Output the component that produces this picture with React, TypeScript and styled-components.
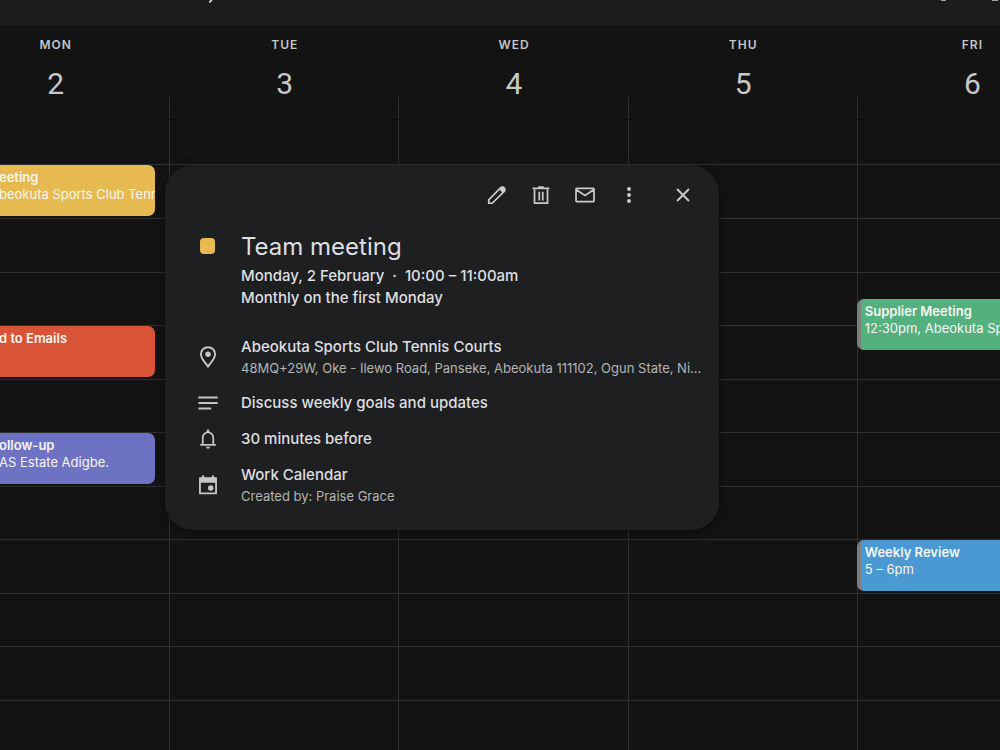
import React from 'react';
import styled, { createGlobalStyle } from 'styled-components';

const GlobalStyle = createGlobalStyle`
  * { box-sizing: border-box; }
  html, body, #root { height: 100%; }
  body {
    margin: 0;
    background: #131313;
    color: #dedfe0;
    font-family: Inter, "Liberation Sans", sans-serif;
    overflow: hidden;
  }
  h1, h2, p { margin: 0; padding: 0; }
`;

const Page = styled.div`
  display: flex;
  flex-direction: column;
  min-height: 100%;
  position: relative;
  overflow: hidden;
`;

const TopBar = styled.header`
  flex: none;
  height: 25px;
  background: #1c1c1c;
  display: flex;
  justify-content: space-between;
`;

const Sliver = styled.svg`
  display: block;
  height: 4px;
`;

const Week = styled.main`
  flex: 1;
  display: grid;
  grid-template-columns: repeat(5, 1fr);
  width: 114.6%;
  margin-left: -5.9%;
`;

const Day = styled.section`
  display: flex;
  flex-direction: column;
  min-width: 0;
`;

const DayHead = styled.header`
  height: 72px;
  padding-top: 11px;
  text-align: center;
`;

const DayName = styled.h2`
  font-size: 12px;
  line-height: 17px;
  font-weight: 600;
  letter-spacing: 1px;
  color: #c4c5c5;
`;

const DayNumber = styled.p`
  margin-top: 11px;
  font-family: Roboto, Inter, sans-serif;
  font-size: 30px;
  line-height: 40px;
  font-weight: 400;
  color: #c6c7c7;
`;

const Slots = styled.div`
  flex: 1;
  display: flex;
  flex-direction: column;
  border-right: 1px solid #303030;
`;

const AllDay = styled.div`
  height: 23px;
  border-bottom: 1px solid #0d0d0d;
  margin-right: -1px;
`;

const Lead = styled.div`
  height: 45px;
  border-bottom: 1px solid #303030;
`;

const Hours = styled.div`
  display: grid;
  grid-template-rows: 54px repeat(5, 54px 53px);
`;

const Slot = styled.div`
  border-bottom: 1px solid #303030;
  min-width: 0;
`;

const Event = styled.article<{ $color: string; $cut?: boolean; $bar?: boolean }>`
  height: 51px;
  margin-right: 14px;
  margin-left: ${p => (p.$bar ? -1 : 0)}px;
  padding: 4px 0 0 ${p => (p.$cut ? 58 : p.$bar ? 4 : 8)}px;
  border-left: ${p => (p.$bar ? '4px solid #7d7d7d' : '0')};
  border-radius: 7px;
  background: ${p => p.$color};
  color: #f7f7f2;
  font-size: 13px;
  line-height: 17px;
  white-space: nowrap;
  overflow: hidden;
`;

const EventTitle = styled.h2`
  font-size: 13px;
  line-height: 17px;
  font-weight: 600;
`;

const HalfPast = styled.div`
  padding-top: 26px;
`;

const Card = styled.aside`
  position: absolute;
  left: 165px;
  top: 165px;
  width: 554px;
  padding: 12px 12px 24px 32px;
  border-radius: 28px;
  background: #1e1f20;
  box-shadow: 0 2px 6px 2px rgba(0, 0, 0, 0.3);
`;

const Actions = styled.div`
  display: flex;
  justify-content: flex-end;
  align-items: center;
  gap: 8px;
  padding-right: 6px;
`;

const IconButton = styled.button<{ $last?: boolean }>`
  display: grid;
  place-items: center;
  width: 36px;
  height: 36px;
  margin-left: ${p => (p.$last ? 10 : 0)}px;
  padding: 0;
  border: 0;
  border-radius: 50%;
  background: transparent;
  color: #c9cbcb;
  cursor: pointer;
`;

const Row = styled.div<{ $gap: number; $top?: boolean }>`
  display: grid;
  grid-template-columns: 22px minmax(0, 1fr);
  column-gap: 22px;
  align-items: ${p => (p.$top ? 'start' : 'center')};
  margin-top: ${p => p.$gap}px;
`;

const Marker = styled.span`
  width: 15px;
  height: 16px;
  margin: 7px 0 0 3px;
  border-radius: 4px;
  background: #e8b951;
`;

const RowIcon = styled.span`
  display: grid;
  place-items: center;
  height: 22px;
  color: #c4c6c6;
`;

const Title = styled.h1`
  margin-bottom: 2px;
  font-size: 24px;
  line-height: 32px;
  font-weight: 400;
`;

const Text = styled.p`
  font-size: 15px;
  line-height: 22px;
  font-weight: 500;
  white-space: pre;
`;

const Small = styled.p`
  font-size: 13px;
  line-height: 20px;
  font-weight: 400;
  color: #b3b5b5;
  white-space: nowrap;
  overflow: hidden;
  text-overflow: ellipsis;
`;

const glyphs = {
  edit: (
    <>
      <path d="M3 21v-3.800L16.300 3.800l3.900 3.900L6.800 21Z" fill="none" stroke="currentColor" strokeWidth="1.900" strokeLinejoin="round" />
      <path d="m14.300 5.700 2.900-2.900q1.100-1 2.300 0l1.700 1.700q1 1.200 0 2.300l-2.900 2.900Z" />
    </>
  ),
  trash: (
    <path
      d="M4.900 6v14.800h14.200V6M2.800 4.900h18.400M9 3.500h6M10.100 8.500v9.500M13.900 8.500v9.500"
      fill="none" stroke="currentColor" strokeWidth="1.900"
    />
  ),
  mail: (
    <path
      d="M3 4.900h18a.8.8 0 0 1 .8.800v12.600a.8.8 0 0 1-.8.800H3a.8.8 0 0 1-.8-.800V5.700a.8.8 0 0 1 .8-.800ZM2.500 6.200 12 12.500l9.500-6.300"
      fill="none" stroke="currentColor" strokeWidth="1.900"
    />
  ),
  more: (
    <>
      <circle cx="12" cy="5.500" r="2.100" />
      <circle cx="12" cy="12" r="2.100" />
      <circle cx="12" cy="18.500" r="2.100" />
    </>
  ),
  close: <path d="m5.500 5.500 13 13M18.500 5.500l-13 13" fill="none" stroke="currentColor" strokeWidth="2.100" />,
  place: (
    <>
      <path
        d="M12 1.300c-4.600 0-7.700 3.400-7.700 7.700 0 5.100 4.500 8.800 7.700 13.300 3.200-4.500 7.700-8.200 7.700-13.300 0-4.300-3.100-7.700-7.700-7.700Z"
        fill="none" stroke="currentColor" strokeWidth="2.100"
      />
      <circle cx="12" cy="8.900" r="3" />
    </>
  ),
  notes: <path d="M1.500 6h21M1.500 12h21M1.500 18h14" fill="none" stroke="currentColor" strokeWidth="2" />,
  bell: (
    <>
      <path d="M3.500 18.500h17M6.300 18v-7.500a5.700 5.700 0 0 1 11.400 0V18" fill="none" stroke="currentColor" strokeWidth="1.900" />
      <path d="M10.500 5V3.200a1.500 1.500 0 0 1 3 0V5ZM9.800 20.500h4.400a2.200 2.200 0 0 1-4.400 0Z" />
    </>
  ),
  calendar: (
    <>
      <path d="M3.200 4.500h17.600v16.700H3.200Z" fill="none" stroke="currentColor" strokeWidth="2" strokeLinejoin="round" />
      <path d="M3 4h18v5.500H3ZM5.500 1.500h2.400V5H5.500ZM16.100 1.500h2.400V5h-2.400Z" />
      <circle cx="15" cy="15.300" r="3" />
    </>
  ),
};

function Icon({ name, size = 22 }: { name: keyof typeof glyphs; size?: number }) {
  return (
    <svg width={size} height={size} viewBox="0 0 24 24" fill="currentColor" aria-hidden="true">
      {glyphs[name]}
    </svg>
  );
}

type Item = { slot: number; color: string; title: string; detail?: string; cut?: boolean; bar?: boolean };

const days: { name: string; date: number; items: Item[] }[] = [
  {
    name: 'MON',
    date: 2,
    items: [
      { slot: 0, color: '#e6b951', title: 'eeting', detail: 'beokuta Sports Club Tennis', cut: true },
      { slot: 3, color: '#d95336', title: 'd to Emails', cut: true },
      { slot: 5, color: '#6e72c3', title: 'ollow-up', detail: 'AS Estate Adigbe.', cut: true },
    ],
  },
  { name: 'TUE', date: 3, items: [] },
  { name: 'WED', date: 4, items: [] },
  { name: 'THU', date: 5, items: [] },
  {
    name: 'FRI',
    date: 6,
    items: [
      { slot: 2.5, color: '#55b080', title: 'Supplier Meeting', detail: '12:30pm, Abeokuta Sports Club', bar: true },
      { slot: 7, color: '#4a99d3', title: 'Weekly Review', detail: '5 – 6pm', bar: true },
    ],
  },
];

function EventBlock({ item }: { item: Item }) {
  const block = (
    <Event $color={item.color} $cut={item.cut} $bar={item.bar}>
      <EventTitle>{item.title}</EventTitle>
      {item.detail && <p>{item.detail}</p>}
    </Event>
  );
  return item.slot % 1 ? <HalfPast>{block}</HalfPast> : block;
}

export default function App() {
  return (
    <>
      <GlobalStyle />
      <Page>
        <TopBar>
          <Sliver width="220" viewBox="0 0 220 4" aria-hidden="true">
            <path d="M209 2q2 0 3-3" stroke="#d5d5d5" strokeWidth="2" fill="none" />
          </Sliver>
          <Sliver width="70" viewBox="0 0 70 4" aria-hidden="true">
            <path d="M11 0h5M62 0h6" stroke="#a5a5a5" strokeWidth="2" fill="none" />
          </Sliver>
        </TopBar>
        <Week>
          {days.map(day => (
            <Day key={day.name}>
              <DayHead>
                <DayName>{day.name}</DayName>
                <DayNumber>{day.date}</DayNumber>
              </DayHead>
              <Slots>
                <AllDay />
                <Lead />
                <Hours>
                  {Array.from({ length: 11 }, (_, i) => {
                    const item = day.items.find(e => Math.floor(e.slot) === i);
                    return <Slot key={i}>{item && <EventBlock item={item} />}</Slot>;
                  })}
                </Hours>
              </Slots>
            </Day>
          ))}
        </Week>
        <Card aria-label="Event details">
          <Actions>
            <IconButton aria-label="Edit event"><Icon name="edit" /></IconButton>
            <IconButton aria-label="Delete event"><Icon name="trash" /></IconButton>
            <IconButton aria-label="Email guests"><Icon name="mail" /></IconButton>
            <IconButton aria-label="Options"><Icon name="more" /></IconButton>
            <IconButton aria-label="Close" $last><Icon name="close" /></IconButton>
          </Actions>
          <Row $gap={18} $top>
            <Marker />
            <div>
              <Title>Team meeting</Title>
              <Text>Monday, 2 February  ·  10:00 – 11:00am</Text>
              <Text>Monthly on the first Monday</Text>
            </div>
          </Row>
          <Row $gap={27}>
            <RowIcon><Icon name="place" /></RowIcon>
            <div>
              <Text>Abeokuta Sports Club Tennis Courts</Text>
              <Small>48MQ+29W, Oke - Ilewo Road, Panseke, Abeokuta 111102, Ogun State, Ni...</Small>
            </div>
          </Row>
          <Row $gap={14}>
            <RowIcon><Icon name="notes" /></RowIcon>
            <Text>Discuss weekly goals and updates</Text>
          </Row>
          <Row $gap={14}>
            <RowIcon><Icon name="bell" /></RowIcon>
            <Text>30 minutes before</Text>
          </Row>
          <Row $gap={14}>
            <RowIcon><Icon name="calendar" /></RowIcon>
            <div>
              <Text>Work Calendar</Text>
              <Small>Created by: Praise Grace</Small>
            </div>
          </Row>
        </Card>
      </Page>
    </>
  );
}
